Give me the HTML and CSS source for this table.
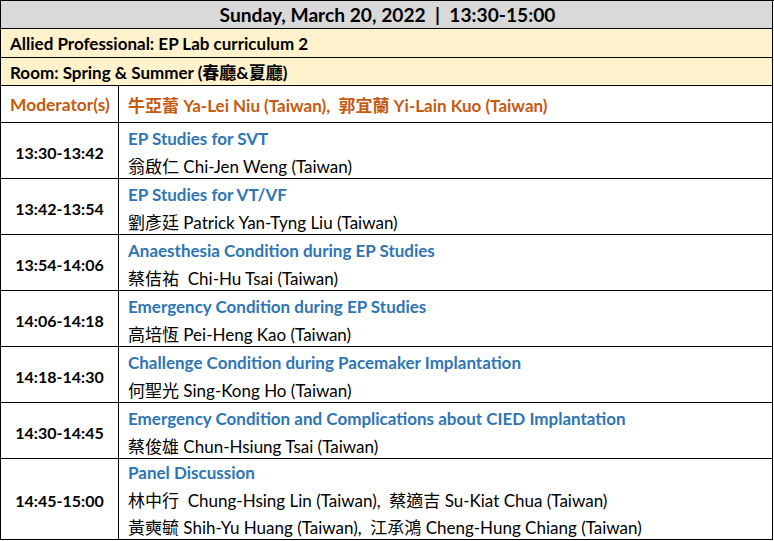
FILE: index.html
```html
<!DOCTYPE html>
<html lang="zh-Hant">
<head>
<meta charset="utf-8">
<title>Schedule</title>
<link rel="stylesheet" href="styles.css">
</head>
<body>
<div class="sched">
  <div class="cell head span">Sunday, March 20, 2022 &nbsp;|&nbsp; 13:30-15:00</div>
  <div class="cell band span">Allied Professional: EP Lab curriculum 2</div>
  <div class="cell band span">Room: Spring &amp; Summer (春廳&amp;夏廳)</div>
  <div class="cell mod-label">Moderator(s)</div>
  <div class="cell mod-names">牛亞蕾 Ya-Lei Niu (Taiwan),&nbsp; 郭宜蘭 Yi-Lain Kuo (Taiwan)</div>

  <div class="cell time">13:30-13:42</div>
  <div class="cell talk"><div class="title">EP Studies for SVT</div><div class="spk">翁啟仁 Chi-Jen Weng (Taiwan)</div></div>

  <div class="cell time">13:42-13:54</div>
  <div class="cell talk"><div class="title">EP Studies for VT/VF</div><div class="spk">劉彥廷 Patrick Yan-Tyng Liu (Taiwan)</div></div>

  <div class="cell time">13:54-14:06</div>
  <div class="cell talk"><div class="title">Anaesthesia Condition during EP Studies</div><div class="spk">蔡佶祐&nbsp; Chi-Hu Tsai (Taiwan)</div></div>

  <div class="cell time">14:06-14:18</div>
  <div class="cell talk"><div class="title">Emergency Condition during EP Studies</div><div class="spk">高培恆 Pei-Heng Kao (Taiwan)</div></div>

  <div class="cell time">14:18-14:30</div>
  <div class="cell talk"><div class="title">Challenge Condition during Pacemaker Implantation</div><div class="spk">何聖光 Sing-Kong Ho (Taiwan)</div></div>

  <div class="cell time">14:30-14:45</div>
  <div class="cell talk"><div class="title">Emergency Condition and Complications about CIED Implantation</div><div class="spk">蔡俊雄 Chun-Hsiung Tsai (Taiwan)</div></div>

  <div class="cell time">14:45-15:00</div>
  <div class="cell talk last"><div class="title">Panel Discussion</div><div class="spk">林中行&nbsp; Chung-Hsing Lin (Taiwan),&nbsp; 蔡適吉 Su-Kiat Chua (Taiwan)</div><div class="spk">黃奭毓 Shih-Yu Huang (Taiwan),&nbsp; 江承鴻 Cheng-Hung Chiang (Taiwan)</div></div>
</div>
</body>
</html>
```
FILE: styles.css
```css
html, body {
  margin: 0;
  padding: 0;
  background: #fff;
}
.sched {
  display: grid;
  grid-template-columns: 118px 654px;
  grid-template-rows: 28px 29px 28px 37px 56px 56px 56px 56px 56px 56px 81px;
  width: 773px;
  border-top: 1px solid #000;
  border-left: 1px solid #000;
  font-family: Lato, "Noto Sans CJK TC", sans-serif;
  color: #000;
}
.cell {
  box-sizing: border-box;
  border-right: 1px solid #000;
  border-bottom: 1px solid #000;
}
.span {
  grid-column: 1 / 3;
}
.head {
  background: #d9d9d9;
  font-weight: 700;
  font-size: 19.2px;
  display: flex;
  align-items: center;
  justify-content: center;
  padding-left: 2px;
}
.band {
  background: #fff2cc;
  font-weight: 700;
  font-size: 17px;
  display: flex;
  align-items: center;
  padding-left: 9px;
}
.mod-label, .mod-names {
  color: #c55a11;
  font-weight: 700;
  font-size: 17px;
  display: flex;
  align-items: center;
}
.mod-label {
  padding-left: 9px;
  font-size: 17.4px;
}
.mod-names {
  padding-left: 9px;
}
.time {
  font-weight: 700;
  font-size: 16px;
  display: flex;
  align-items: center;
  justify-content: center;
  padding-top: 3px;
}
.talk {
  padding-left: 9px;
  padding-top: 4px;
  display: flex;
  flex-direction: column;
  justify-content: center;
  font-size: 17px;
  line-height: 28px;
}
.talk.last {
  justify-content: flex-start;
  padding-top: 0;
  line-height: 27.5px;
}
.title {
  color: #2e75b6;
  font-weight: 700;
}
.spk {
  color: #000;
}
```
